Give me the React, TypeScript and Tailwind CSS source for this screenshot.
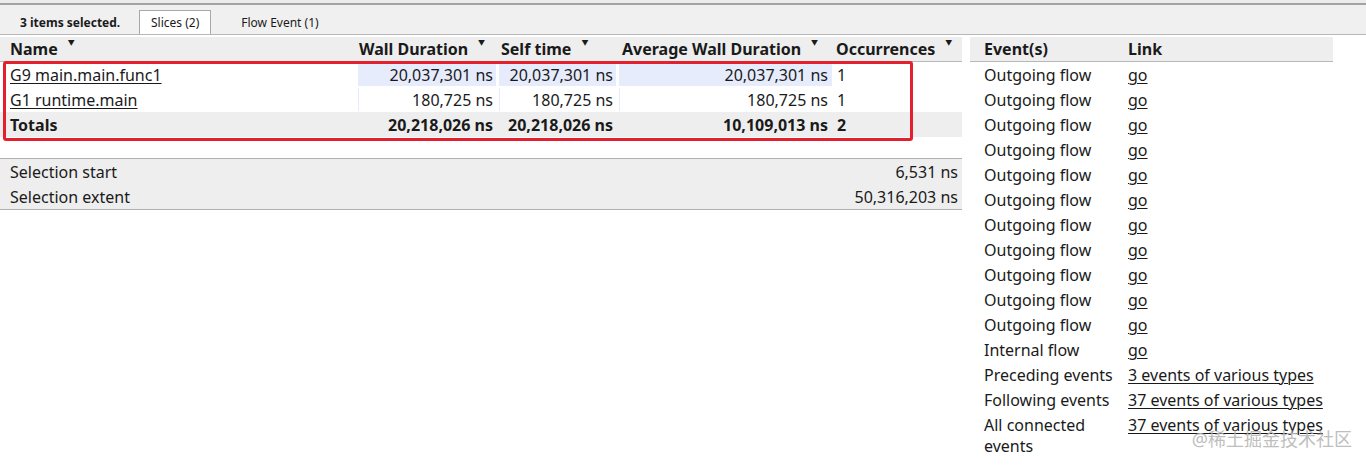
import React from 'react';

const FONT = { fontFamily: '"Noto Sans", "Noto Sans CJK SC", sans-serif' };

type Row = { name: string; wall: number; self: number; avg: number; occ: number };

const rows: Row[] = [
  { name: 'G9 main.main.func1', wall: 20037301, self: 20037301, avg: 20037301, occ: 1 },
  { name: 'G1 runtime.main', wall: 180725, self: 180725, avg: 180725, occ: 1 },
];

const fmt = (n: number) => n.toLocaleString('en-US') + ' ns';

const SortArrow = () => <span className="ml-[10px] text-[7px] leading-none relative top-[-7px]">▼</span>;

// numeric cell with the light blue proportional bar behind the value
const BarCell: React.FC<{ value: number; max: number }> = ({ value, max }) => (
  <div className="relative h-[25px] flex items-center justify-end pr-[4px] pt-[1px]">
    <div
      className="absolute left-[2px] top-[1px] bottom-[1px] bg-[#e6ecfb]"
      style={{ width: `calc(${(value / max) * 100}% - 2px)`, minWidth: 1 }}
    />
    <span className="relative">{fmt(value)}</span>
  </div>
);

const events: { label: string; link: string }[] = [
  ...Array.from({ length: 11 }, () => ({ label: 'Outgoing flow', link: 'go' })),
  { label: 'Internal flow', link: 'go' },
  { label: 'Preceding events', link: '3 events of various types' },
  { label: 'Following events', link: '37 events of various types' },
  { label: 'All connected events', link: '37 events of various types' },
];

const App: React.FC = () => {
  const totalWall = rows.reduce((s, r) => s + r.wall, 0);
  const totalSelf = rows.reduce((s, r) => s + r.self, 0);
  const totalOcc = rows.reduce((s, r) => s + r.occ, 0);
  const maxAvg = Math.max(...rows.map((r) => r.avg));

  return (
    <div className="relative w-[1366px] h-[468px] overflow-hidden bg-white text-[16px] text-[#1a1a1a]" style={FONT}>
      {/* Top strip + tabs */}
      <div className="h-[3px] bg-[#ececec]" />
      <div className="h-[32px] bg-[#f0f0f0] border-t-2 border-t-[#a3a3a3] border-b border-b-[#b8b8b8] flex items-end pl-[20px] text-[12px]">
        <div className="h-[24px] flex items-center pt-[1px] font-bold w-[119px]">3 items selected.</div>
        <div className="h-[24px] px-[11px] flex items-center pt-[1px] bg-white border border-b-0 border-[#a8a8a8]">Slices (2)</div>
        <div className="h-[24px] pl-[30px] flex items-center pt-[1px]">Flow Event (1)</div>
      </div>

      <div className="flex mt-[2px]">
        {/* Left panel */}
        <div className="w-[962px] flex flex-col">
          <div className="grid grid-cols-[356px_141px_120px_215px_130px]">
            {/* header */}
            <div className="h-[25px] bg-[#eeeeee] border-b border-[#b8b8b8] font-bold flex items-center pl-[10px]">Name<SortArrow /></div>
            <div className="h-[25px] bg-[#eeeeee] border-b border-[#b8b8b8] font-bold flex items-center pl-[3px]">Wall Duration<SortArrow /></div>
            <div className="h-[25px] bg-[#eeeeee] border-b border-[#b8b8b8] font-bold flex items-center pl-[4px]">Self time<SortArrow /></div>
            <div className="h-[25px] bg-[#eeeeee] border-b border-[#b8b8b8] font-bold flex items-center pl-[5px]">Average Wall Duration<SortArrow /></div>
            <div className="h-[25px] bg-[#eeeeee] border-b border-[#b8b8b8] font-bold flex items-center pl-[4px]">Occurrences<SortArrow /></div>

            {rows.map((r) => (
              <React.Fragment key={r.name}>
                <div className="h-[25px] flex items-center pl-[10px] pt-[1px]">
                  <span className="underline underline-offset-2 decoration-1">{r.name}</span>
                </div>
                <BarCell value={r.wall} max={totalWall} />
                <BarCell value={r.self} max={totalSelf} />
                <BarCell value={r.avg} max={maxAvg} />
                <div className="h-[25px] flex items-center pl-[5px] pt-[1px]">{r.occ}</div>
              </React.Fragment>
            ))}

            {/* totals */}
            <div className="h-[25px] bg-[#eeeeee] font-bold flex items-center pl-[10px] pt-[1px]">Totals</div>
            <div className="h-[25px] bg-[#eeeeee] font-bold flex items-center justify-end pr-[4px] pt-[1px]">{fmt(totalWall)}</div>
            <div className="h-[25px] bg-[#eeeeee] font-bold flex items-center justify-end pr-[4px] pt-[1px]">{fmt(totalSelf)}</div>
            <div className="h-[25px] bg-[#eeeeee] font-bold flex items-center justify-end pr-[4px] pt-[1px]">{fmt(Math.round(totalWall / totalOcc))}</div>
            <div className="h-[25px] bg-[#eeeeee] font-bold flex items-center pl-[5px] pt-[1px]">{totalOcc}</div>
          </div>

          {/* selection info */}
          <div className="mt-[21px] bg-[#eeeeee] border-t border-b border-[#b0b0b0]">
            <div className="h-[25px] flex items-center justify-between pl-[10px] pr-[4px] pt-[1px]">
              <span>Selection start</span>
              <span>6,531 ns</span>
            </div>
            <div className="h-[25px] flex items-center justify-between pl-[10px] pr-[4px] pt-[1px]">
              <span>Selection extent</span>
              <span>50,316,203 ns</span>
            </div>
          </div>
        </div>

        {/* Right panel */}
        <div className="ml-[8px] w-[363px]">
          <div className="grid grid-cols-[154px_1fr]">
            <div className="h-[25px] bg-[#eeeeee] border-b border-[#b8b8b8] font-bold flex items-center pl-[14px]">Event(s)</div>
            <div className="h-[25px] bg-[#eeeeee] border-b border-[#b8b8b8] font-bold flex items-center pl-[4px]">Link</div>
            {events.map((e, i) => (
              <React.Fragment key={i}>
                <div className="min-h-[25px] pl-[14px] pt-[3px] pb-[1px] leading-[21px]">{e.label}</div>
                <div className="min-h-[25px] pl-[4px] pt-[3px] pb-[1px] leading-[21px]">
                  <span className="underline underline-offset-2 decoration-1">{e.link}</span>
                </div>
              </React.Fragment>
            ))}
          </div>
        </div>
      </div>

      {/* red highlight box drawn over the slice rows */}
      <div className="absolute left-[3px] top-[61px] w-[910px] h-[80px] border-[3px] border-[#e3202e] rounded-[3px] pointer-events-none" />

      {/* watermark */}
      <div className="absolute right-[14px] bottom-[15px] text-[18px] text-[#b8b8b8] opacity-90 pointer-events-none">@稀土掘金技术社区</div>
    </div>
  );
};

export default App;
